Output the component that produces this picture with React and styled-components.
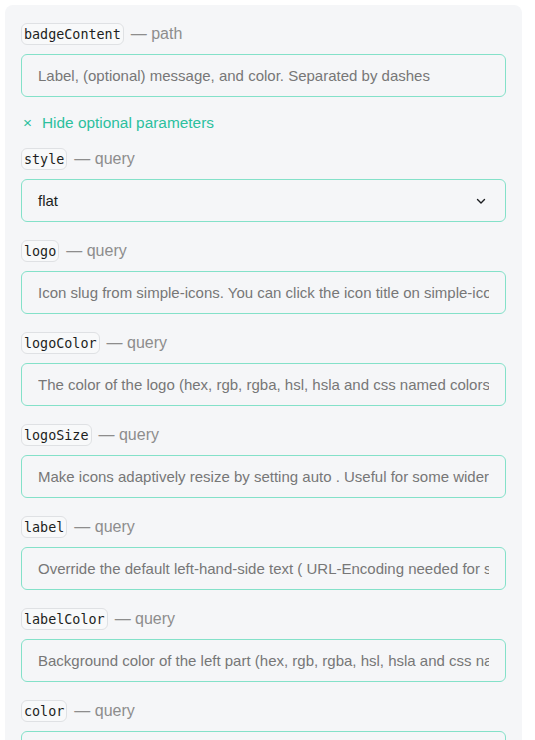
import React from 'react';
import styled, { createGlobalStyle } from 'styled-components';

const GlobalStyle = createGlobalStyle`
    body {
        margin: 0;
        background: #ffffff;
        font-family: "Liberation Sans", Arial, sans-serif;
    }
`;

const Panel = styled.div`
    margin: 5px 13px 0 5px;
    padding: 18px 16px 20px 16px;
    background-color: #f5f6f8;
    border-radius: 8px;
    display: flex;
    flex-direction: column;
`;

const Field = styled.div`
    display: flex;
    flex-direction: column;
    gap: 9px;
    margin-bottom: ${props => props.$last ? '0' : '18px'};
`;

const LabelRow = styled.div`
    display: flex;
    align-items: center;
    gap: 7px;
    height: 22px;
`;

const Code = styled.code`
    box-sizing: border-box;
    display: inline-flex;
    align-items: center;
    height: 22px;
    font-family: "DejaVu Sans Mono", "Liberation Mono", monospace;
    font-size: 13.4px;
    color: #1c1e21;
    background-color: #f8f9fa;
    border: 1px solid #dfe1e4;
    border-radius: 6px;
    padding: 0 2px;
`;

const Kind = styled.span`
    font-size: 16px;
    color: #8d8d8d;
`;

const fieldBox = `
    box-sizing: border-box;
    height: 43px;
    border: 1px solid #84e1c9;
    border-radius: 6px;
    background-color: #f5f6f8;
    font-family: "Liberation Sans", Arial, sans-serif;
    font-size: 15px;
    color: #1c1e21;
`;

const TextInput = styled.input`
    ${fieldBox}
    width: 100%;
    padding: 0 16px;
    outline: none;

    &::placeholder {
        color: #777777;
    }
`;

const Select = styled.div`
    ${fieldBox}
    display: flex;
    align-items: center;
    justify-content: space-between;
    padding: 0 18px 0 16px;
`;

const Toggle = styled.button`
    display: flex;
    align-items: center;
    gap: 10px;
    align-self: flex-start;
    height: 17px;
    margin: -1px 0 17px 0;
    padding: 0 0 0 2px;
    border: 0;
    background: none;
    color: #2cc09e;
    font-family: "Liberation Sans", Arial, sans-serif;
    font-size: 15.4px;
    cursor: pointer;
`;

const fields = [
    { name: 'logo', placeholder: 'Icon slug from simple-icons. You can click the icon title on simple-icons to copy the slug' },
    { name: 'logoColor', placeholder: 'The color of the logo (hex, rgb, rgba, hsl, hsla and css named colors supported)' },
    { name: 'logoSize', placeholder: 'Make icons adaptively resize by setting auto . Useful for some wider logos' },
    { name: 'label', placeholder: 'Override the default left-hand-side text ( URL-Encoding needed for spaces or special characters!)' },
    { name: 'labelColor', placeholder: 'Background color of the left part (hex, rgb, rgba, hsl, hsla and css named colors supported)' },
    { name: 'color', placeholder: 'Background color of the right part (hex, rgb, rgba, hsl, hsla and css named colors supported)' },
];

const Chevron = () => (
    <svg width="12" height="12" viewBox="0 0 12 12" fill="none">
        <path d="M2.5 4.5 L6 8 L9.5 4.5" stroke="#1c1e21" strokeWidth="1.4" strokeLinecap="round" strokeLinejoin="round" />
    </svg>
);

export default function App() {
    return (
        <>
            <GlobalStyle />
            <Panel>
                <Field>
                    <LabelRow><Code>badgeContent</Code><Kind>— path</Kind></LabelRow>
                    <TextInput placeholder="Label, (optional) message, and color. Separated by dashes" />
                </Field>
                <Toggle>
                    <span>×</span>
                    <span>Hide optional parameters</span>
                </Toggle>
                <Field>
                    <LabelRow><Code>style</Code><Kind>— query</Kind></LabelRow>
                    <Select>
                        <span>flat</span>
                        <Chevron />
                    </Select>
                </Field>
                {fields.map((f, i) => (
                    <Field key={f.name} $last={i === fields.length - 1}>
                        <LabelRow><Code>{f.name}</Code><Kind>— query</Kind></LabelRow>
                        <TextInput placeholder={f.placeholder} />
                    </Field>
                ))}
            </Panel>
        </>
    );
}
